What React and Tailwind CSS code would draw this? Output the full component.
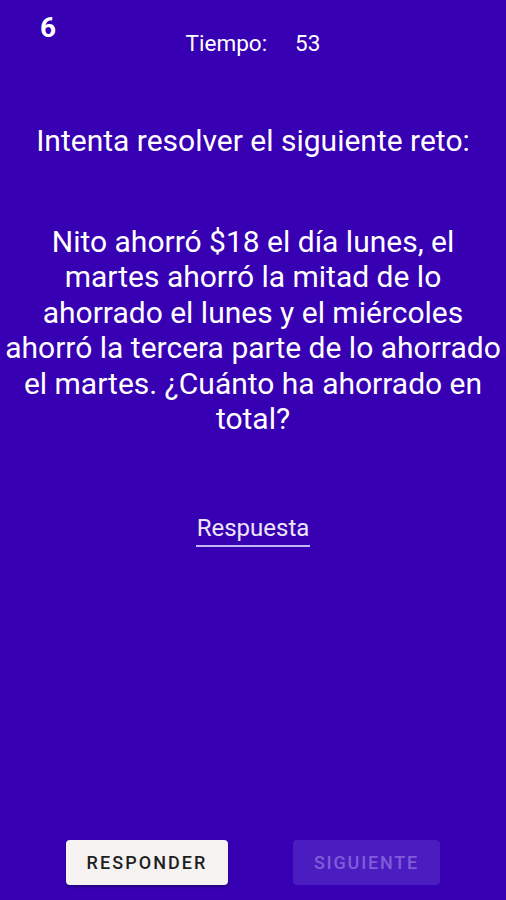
import React from 'react';

export default function App() {
  return (
    <div className="h-[900px] w-full bg-[#3700b3] text-white flex flex-col font-['Roboto',sans-serif] overflow-hidden">
      {/* Header: level + timer */}
      <div className="grid grid-cols-[1fr_auto_1fr] items-start pt-[14px]">
        <div className="pl-[40px] text-[28px] leading-none font-bold">6</div>
        <div className="mt-[17.5px] flex gap-[28px] text-[22.5px] leading-none">
          <span>Tiempo:</span>
          <span>53</span>
        </div>
        <div></div>
      </div>

      {/* Title */}
      <h1 className="mt-[71.5px] text-center text-[30px] leading-none">
        Intenta resolver el siguiente reto:
      </h1>

      {/* Problem */}
      <p className="mt-[68px] text-center text-[30px] leading-[35.5px] whitespace-nowrap">
        Nito ahorró $18 el día lunes, el<br />
        martes ahorró la mitad de lo<br />
        ahorrado el lunes y el miércoles<br />
        ahorró la tercera parte de lo ahorrado<br />
        el martes. ¿Cuánto ha ahorrado en<br />
        total?
      </p>

      {/* Answer input */}
      <div className="mt-[79px] flex justify-center">
        <div className="border-b-2 border-[#c6b5f3] pb-[5px] px-px text-[24px] leading-none text-[#ece6fa]">
          Respuesta
        </div>
      </div>

      <div className="flex-1"></div>

      {/* Actions */}
      <div className="flex justify-center gap-[65px] pb-[15px]">
        <button className="w-[162px] h-[45px] rounded-[4px] bg-[#f6f2f2] text-[#1e1e1e] text-[18px] font-medium tracking-[0.115em] shadow-[0_2px_3px_rgba(0,0,0,0.3)]">
          RESPONDER
        </button>
        <button disabled className="w-[147px] h-[45px] rounded-[4px] bg-[#4b1cc0] text-[#7f5dd8] text-[18px] font-medium tracking-[0.1em]">
          SIGUIENTE
        </button>
      </div>
    </div>
  );
}
